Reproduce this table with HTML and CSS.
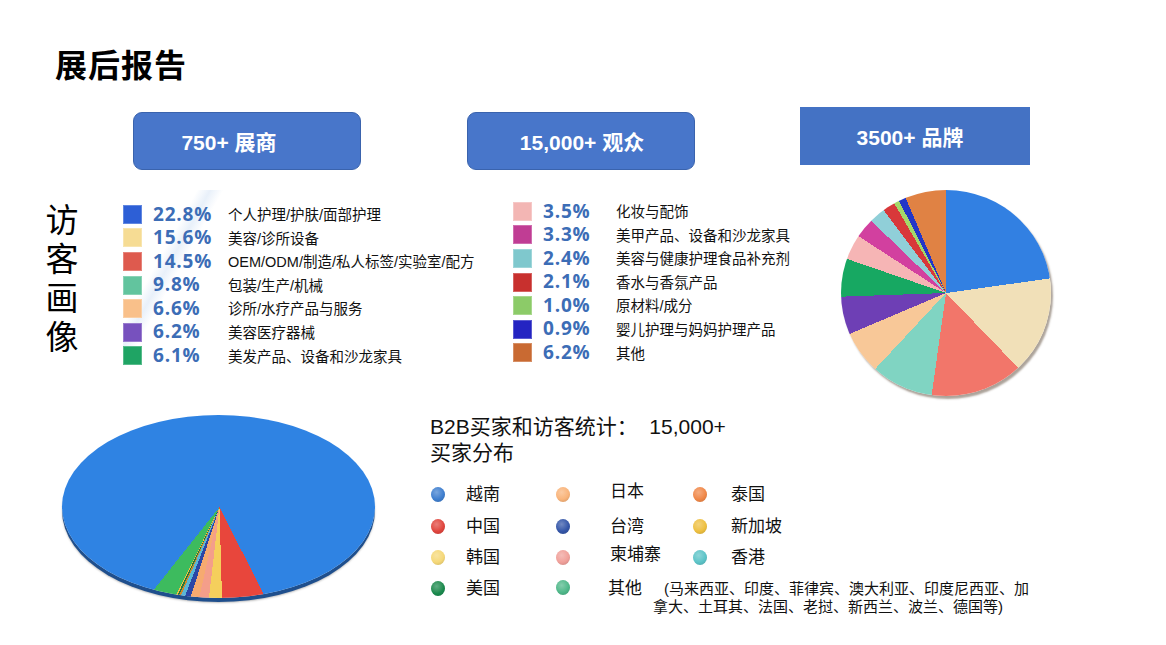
FILE: index.html
```html
<!DOCTYPE html>
<html lang="zh-CN">
<head>
<meta charset="utf-8">
<title>展后报告</title>
<link rel="stylesheet" href="styles.css">
</head>
<body>
<div class="page">
  <h1 class="title">展后报告</h1>

  <div class="stats">
    <div class="stat stat--pill stat--first">750+ 展商</div>
    <div class="stat stat--pill stat--second">15,000+ 观众</div>
    <div class="stat stat--rect">3500+ 品牌</div>
  </div>

  <div class="profile">
    <div class="vlabel"><span class="vtext">访客画像</span></div>
    <ul class="legend legend--a">
      <li class="legend-row"><span class="sw" style="background:#2d5fd6"></span><span class="pct">22.8%</span><span class="lbl">个人护理/护肤/面部护理</span></li>
      <li class="legend-row"><span class="sw" style="background:#f6dc94"></span><span class="pct">15.6%</span><span class="lbl">美容/诊所设备</span></li>
      <li class="legend-row"><span class="sw" style="background:#de5a4e"></span><span class="pct">14.5%</span><span class="lbl">OEM/ODM/制造/私人标签/实验室/配方</span></li>
      <li class="legend-row"><span class="sw" style="background:#62c49e"></span><span class="pct">9.8%</span><span class="lbl">包装/生产/机械</span></li>
      <li class="legend-row"><span class="sw" style="background:#f9c08a"></span><span class="pct">6.6%</span><span class="lbl">诊所/水疗产品与服务</span></li>
      <li class="legend-row"><span class="sw" style="background:#7751be"></span><span class="pct">6.2%</span><span class="lbl">美容医疗器械</span></li>
      <li class="legend-row"><span class="sw" style="background:#1fa464"></span><span class="pct">6.1%</span><span class="lbl">美发产品、设备和沙龙家具</span></li>
    </ul>
    <ul class="legend legend--b">
      <li class="legend-row"><span class="sw" style="background:#f3b6b4"></span><span class="pct">3.5%</span><span class="lbl">化妆与配饰</span></li>
      <li class="legend-row"><span class="sw" style="background:#c03d94"></span><span class="pct">3.3%</span><span class="lbl">美甲产品、设备和沙龙家具</span></li>
      <li class="legend-row"><span class="sw" style="background:#7fc8cd"></span><span class="pct">2.4%</span><span class="lbl">美容与健康护理食品补充剂</span></li>
      <li class="legend-row"><span class="sw" style="background:#c8302e"></span><span class="pct">2.1%</span><span class="lbl">香水与香氛产品</span></li>
      <li class="legend-row"><span class="sw" style="background:#8ccb68"></span><span class="pct">1.0%</span><span class="lbl">原材料/成分</span></li>
      <li class="legend-row"><span class="sw" style="background:#2424c2"></span><span class="pct">0.9%</span><span class="lbl">婴儿护理与妈妈护理产品</span></li>
      <li class="legend-row"><span class="sw" style="background:#c96a32"></span><span class="pct">6.2%</span><span class="lbl">其他</span></li>
    </ul>
    <div class="pie-brands"></div>
  </div>

  <div class="buyers">
    <div class="pie-buyers"></div>
    <div class="buyer-info">
      <p class="buyer-title">B2B买家和访客统计：&nbsp; 15,000+<br>买家分布</p>
      <div class="country-grid">
        <div class="country col-a"><span class="dot" style="--c:#3f7fcf"></span><span class="cname">越南</span></div>
        <div class="country col-b"><span class="dot" style="--c:#f9b47a"></span><span class="cname up">日本</span></div>
        <div class="country col-c"><span class="dot" style="--c:#f08848"></span><span class="cname">泰国</span></div>

        <div class="country col-a"><span class="dot" style="--c:#e0453e"></span><span class="cname">中国</span></div>
        <div class="country col-b"><span class="dot" style="--c:#3556a8"></span><span class="cname">台湾</span></div>
        <div class="country col-c"><span class="dot" style="--c:#eec040"></span><span class="cname">新加坡</span></div>

        <div class="country col-a"><span class="dot" style="--c:#f5d878"></span><span class="cname">韩国</span></div>
        <div class="country col-b"><span class="dot" style="--c:#f0a09a"></span><span class="cname up">柬埔寨</span></div>
        <div class="country col-c"><span class="dot" style="--c:#5cc4c8"></span><span class="cname">香港</span></div>

        <div class="country col-a"><span class="dot" style="--c:#1a8a4e"></span><span class="cname">美国</span></div>
        <div class="country col-b country--other"><span class="dot" style="--c:#4fb88a"></span><span class="cname">其他</span><span class="others">(马来西亚、印度、菲律宾、澳大利亚、印度尼西亚、加<br>拿大、土耳其、法国、老挝、新西兰、波兰、德国等)</span></div>
      </div>
    </div>
  </div>
</div>
</body>
</html>
```

FILE: styles.css
```css
* { box-sizing: border-box; }

html, body {
  margin: 0;
  padding: 0;
  background: #ffffff;
}

body {
  font-family: "Liberation Sans", "Noto Sans CJK SC", sans-serif;
  color: #000;
}

.page {
  width: 1166px;
  height: 645px;
  overflow: hidden;
  padding-top: 43px;
}

.title {
  margin: 0 0 0 55px;
  font-family: "Noto Sans CJK SC", sans-serif;
  font-size: 32px;
  line-height: 40px;
  font-weight: 700;
  letter-spacing: 1px;
}

/* stat boxes */
.stats {
  display: flex;
  align-items: flex-start;
  margin-top: 24px;
  padding-left: 133px;
}

.stat {
  display: flex;
  align-items: center;
  justify-content: center;
  height: 58px;
  color: #fff;
  font-family: "Liberation Sans", "Noto Sans CJK SC", sans-serif;
  font-weight: 700;
  font-size: 21px;
}

.stat--pill {
  width: 228px;
  margin-top: 5px;
  background: #4876ca;
  border: 1px solid #3a63ad;
  border-radius: 9px;
}

.stat--first {
  padding-right: 36px;
}

.stat--second {
  margin-left: 106px;
  padding-left: 2px;
}

.stat--rect {
  width: 230px;
  margin-left: 105px;
  background: #4472c4;
  padding-right: 10px;
}

/* profile */
.profile {
  display: flex;
  align-items: flex-start;
  margin-top: 20px;
  padding-left: 45px;
  height: 206px;
}

.vlabel {
  display: flex;
  width: 78px;
  margin-top: 13px;
}

.vtext {
  writing-mode: vertical-rl;
  font-family: "Noto Sans CJK SC", sans-serif;
  font-weight: 400;
  font-size: 33px;
  line-height: 34px;
  letter-spacing: 6px;
}

.legend {
  list-style: none;
  margin: 0;
  padding: 0;
}

.legend--a {
  width: 390px;
  padding-top: 11px;
  background: linear-gradient(119deg, rgba(255,255,255,0) 15.2%, rgba(214,228,245,0.55) 17.9%, rgba(255,255,255,0) 20.6%);
}

.legend--b {
  width: 328px;
  padding-top: 8px;
}

.legend-row {
  display: grid;
  grid-template-columns: 19px 64px 1fr;
  column-gap: 11px;
  align-items: center;
  height: 23.6px;
}

.legend--b .legend-row {
  grid-template-columns: 19px 62px 1fr;
}

.sw {
  width: 19px;
  height: 19px;
  box-shadow: inset 0 0 0 1px rgba(255,255,255,0.25);
}

.pct {
  font-family: "Open Sans", "Liberation Sans", sans-serif;
  font-weight: 700;
  font-size: 19px;
  letter-spacing: 0.8px;
  color: #3c6db6;
  line-height: 23.6px;
  white-space: nowrap;
}

.lbl {
  font-size: 14.5px;
  line-height: 23.6px;
  padding-top: 3px;
  white-space: nowrap;
  color: #111;
}

.pie-brands {
  width: 210px;
  height: 206px;
  border-radius: 50%;
  background: conic-gradient(
    #3280e2 0deg 82deg,
    #f1e0b8 82deg 136deg,
    #f2766a 136deg 188deg,
    #80d4c2 188deg 223deg,
    #f8c898 223deg 247deg,
    #6e3fb5 247deg 268deg,
    #17a862 268deg 289deg,
    #f6b5b5 289deg 303deg,
    #d2409f 303deg 314deg,
    #90cfd8 314deg 323deg,
    #d8383a 323deg 330deg,
    #a4d86a 330deg 333deg,
    #2336c8 333deg 337deg,
    #e08244 337deg 360deg
  );
  box-shadow: 2px 3px 2px rgba(70, 50, 30, 0.45);
}

/* buyers */
.buyers {
  display: flex;
  align-items: flex-start;
  margin-top: 19px;
  padding-left: 62px;
}

.pie-buyers {
  width: 313px;
  height: 183px;
  border-radius: 50%;
  background: conic-gradient(from 0deg at 50.3% 50.4%,
    #2f83e3 0deg 153deg,
    #e8463c 153deg 178.4deg,
    #f5cf5c 178.4deg 186.6deg,
    #f49e8a 186.6deg 192.6deg,
    #f6aa70 192.6deg 197.8deg,
    #2c46a6 197.8deg 201.2deg,
    #5bb7d6 201.2deg 203.6deg,
    #c98a2e 203.6deg 204.6deg,
    #24773e 204.6deg 205.6deg,
    #f0c040 205.6deg 206.3deg,
    #3dbb5e 206.3deg 218.5deg,
    #2f83e3 218.5deg 360deg
  );
  box-shadow: 0 4px 0 #1f4f8d, 0 5px 2px rgba(0,0,0,0.25);
}

.buyer-info {
  margin-left: 55px;
  margin-top: -1px;
}

.buyer-title {
  margin: 0;
  font-size: 21px;
  line-height: 26px;
  color: #111;
  white-space: nowrap;
}

.country-grid {
  display: grid;
  grid-template-columns: 125px 137px 200px;
  grid-auto-rows: 31.4px;
  margin-top: 13px;
}

.country {
  display: flex;
  align-items: center;
  padding-left: 1px;
}

.dot {
  flex: none;
  width: 14px;
  height: 15px;
  border-radius: 50%;
  background: radial-gradient(circle at 40% 35%, color-mix(in srgb, var(--c) 70%, #fff) 0%, var(--c) 55%, color-mix(in srgb, var(--c) 80%, #000) 100%);
}

.cname {
  font-size: 17px;
  line-height: 31px;
  white-space: nowrap;
  color: #111;
}

.cname.up {
  position: relative;
  top: -3px;
}

.col-a .cname { margin-left: 21px; }
.col-b .cname { margin-left: 40px; }
.col-c .cname { margin-left: 24px; }

.country--other {
  grid-column: 2 / span 2;
  align-items: flex-start;
  width: 480px;
}

.country--other .dot {
  margin-top: 7px;
}

.country--other .cname {
  margin-left: 38px;
}

.others {
  margin-left: 11px;
  padding-top: 7px;
  font-size: 15px;
  line-height: 18px;
  text-indent: 11px;
  white-space: nowrap;
  color: #111;
}
```
